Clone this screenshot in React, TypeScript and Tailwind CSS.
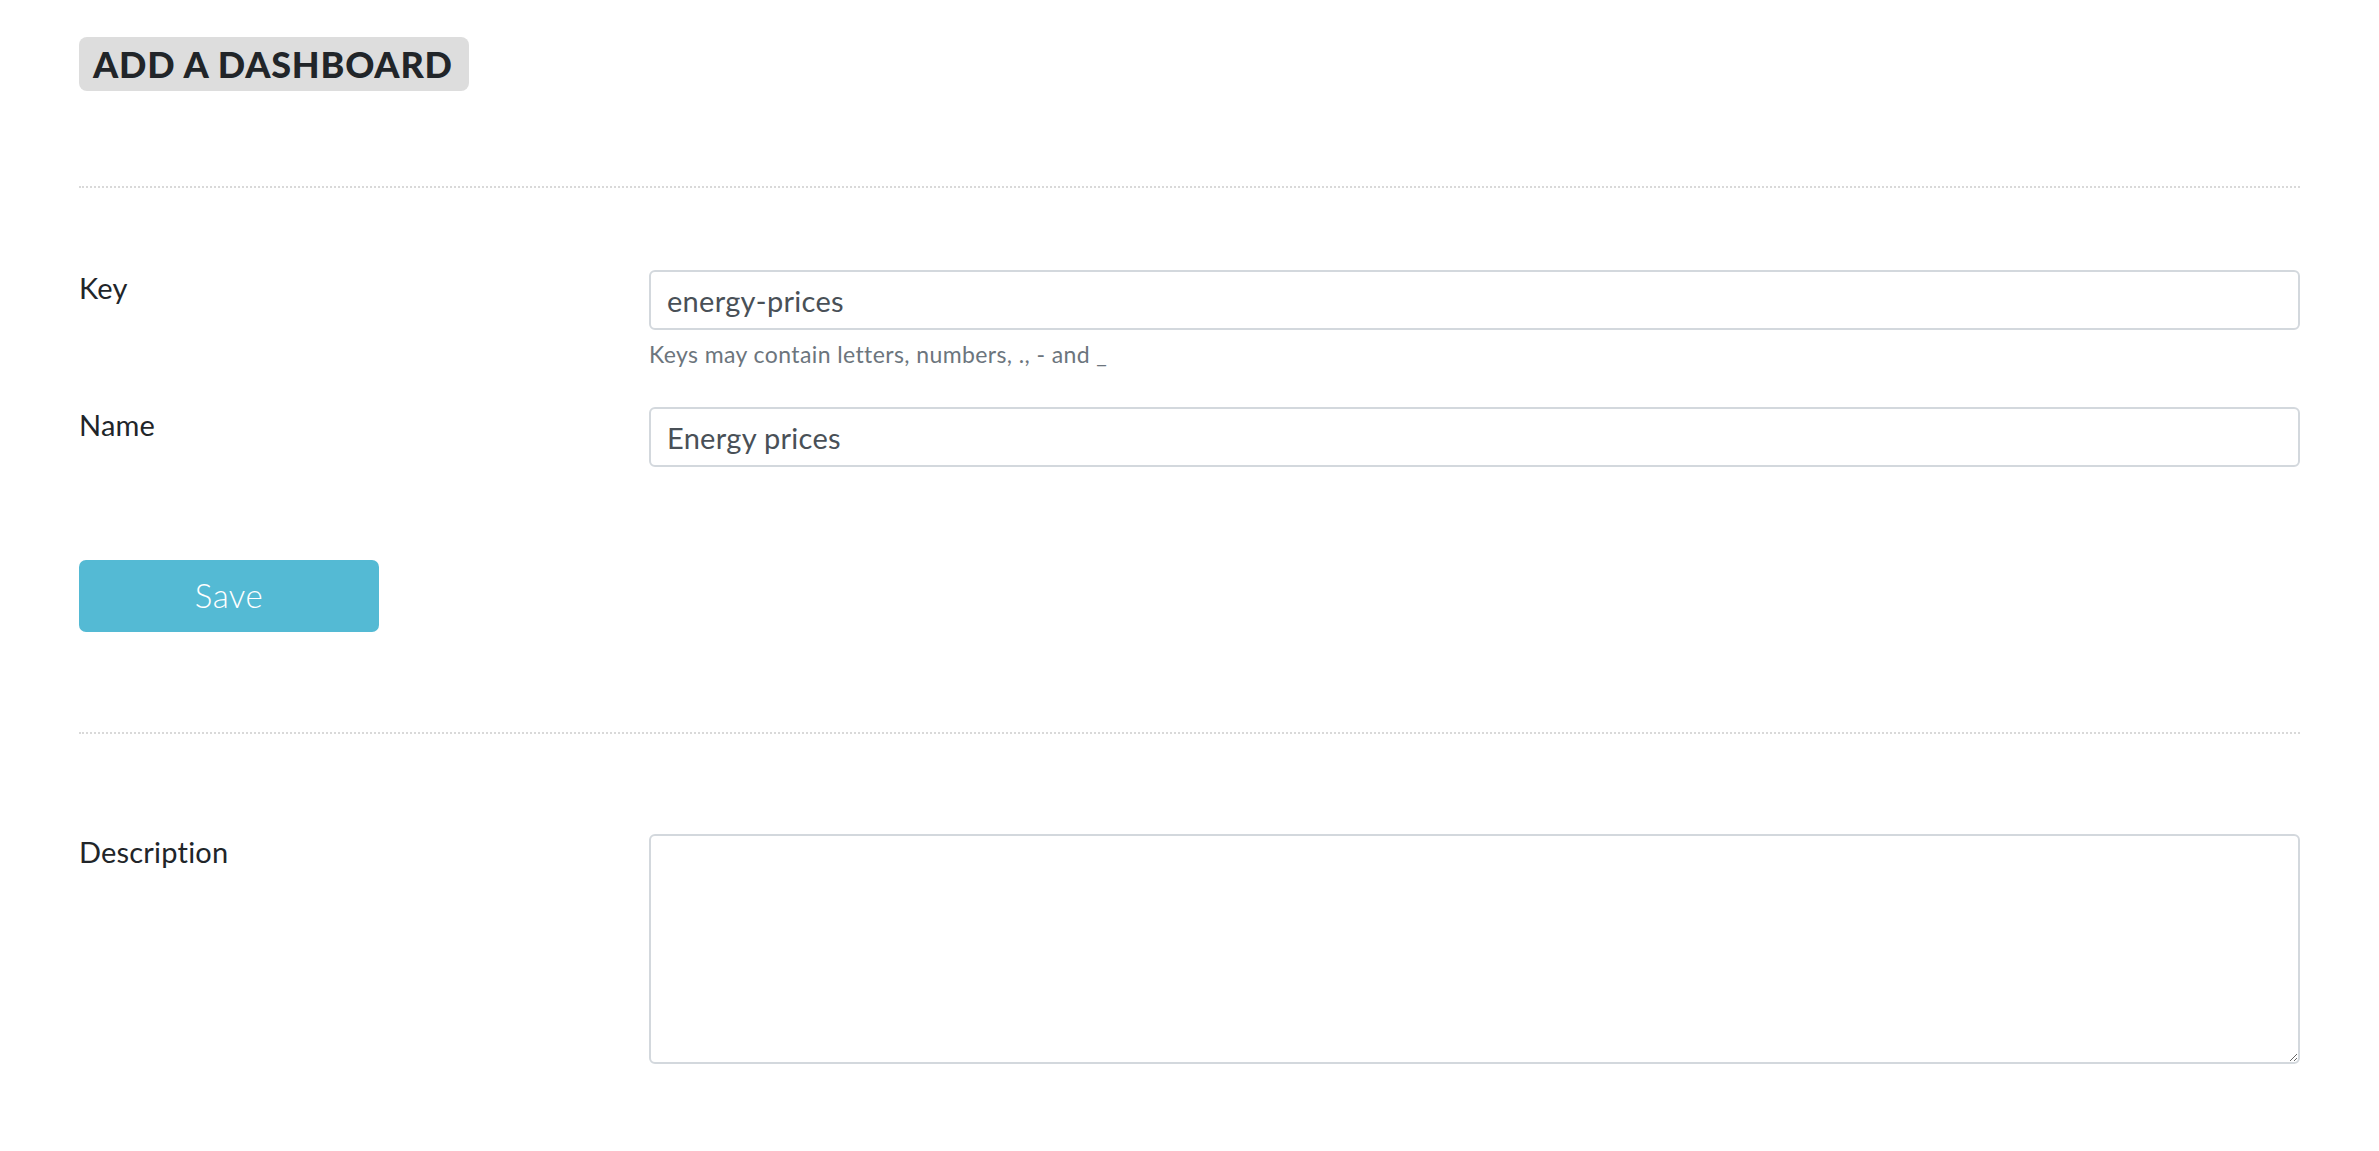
import React from 'react';

const Divider = () => <div className="border-t-2 border-dotted border-[#d9d9d9] w-full" />;

interface FieldRowProps {
  label: string;
  children: React.ReactNode;
}

const FieldRow: React.FC<FieldRowProps> = ({ label, children }) => (
  <div className="flex">
    <label className="w-[570px] shrink-0 text-[29px] leading-[36px] tracking-[0.2px] text-[#212529]">{label}</label>
    <div className="flex-1">{children}</div>
  </div>
);

export default function App() {
  return (
    <div className="min-h-screen bg-white px-[79px] pt-[37px] font-['Lato',sans-serif] text-[#212529]">
      <h1 className="inline-block h-[54px] rounded-[8px] bg-[#dddddd] pl-[14px] pr-[16px] text-[36px] font-black leading-[54px] tracking-[0.8px] text-[#212529]">
        ADD A DASHBOARD
      </h1>

      <div className="mt-[95px]">
        <Divider />
      </div>

      <div className="mt-[82px] flex flex-col">
        <FieldRow label="Key">
          <input
            type="text"
            defaultValue="energy-prices"
            className="block h-[60px] w-full rounded-[6px] border-2 border-[#d3d8dd] bg-white px-[16px] text-[29px] tracking-[0.3px] text-[#495057] outline-none"
          />
          <p className="mt-[8px] text-[23px] leading-[33px] tracking-[0.4px] text-[#6c757d]">Keys may contain letters, numbers, ., - and _</p>
        </FieldRow>

        <div className="mt-[36px]">
          <FieldRow label="Name">
            <input
              type="text"
              defaultValue="Energy prices"
              className="block h-[60px] w-full rounded-[6px] border-2 border-[#d3d8dd] bg-white px-[16px] text-[29px] tracking-[0.3px] text-[#495057] outline-none"
            />
          </FieldRow>
        </div>

        <div className="mt-[93px]">
          <button className="h-[72px] w-[300px] rounded-[7px] bg-[#54bad4] text-[33px] font-light tracking-[0.5px] text-white">Save</button>
        </div>
      </div>

      <div className="mt-[100px]">
        <Divider />
      </div>

      <div className="mt-[100px]">
        <FieldRow label="Description">
          <textarea className="block h-[230px] w-full rounded-[6px] border-2 border-[#d3d8dd] bg-white px-[16px] py-[10px] text-[29px] text-[#495057] outline-none" />
        </FieldRow>
      </div>
    </div>
  );
}
